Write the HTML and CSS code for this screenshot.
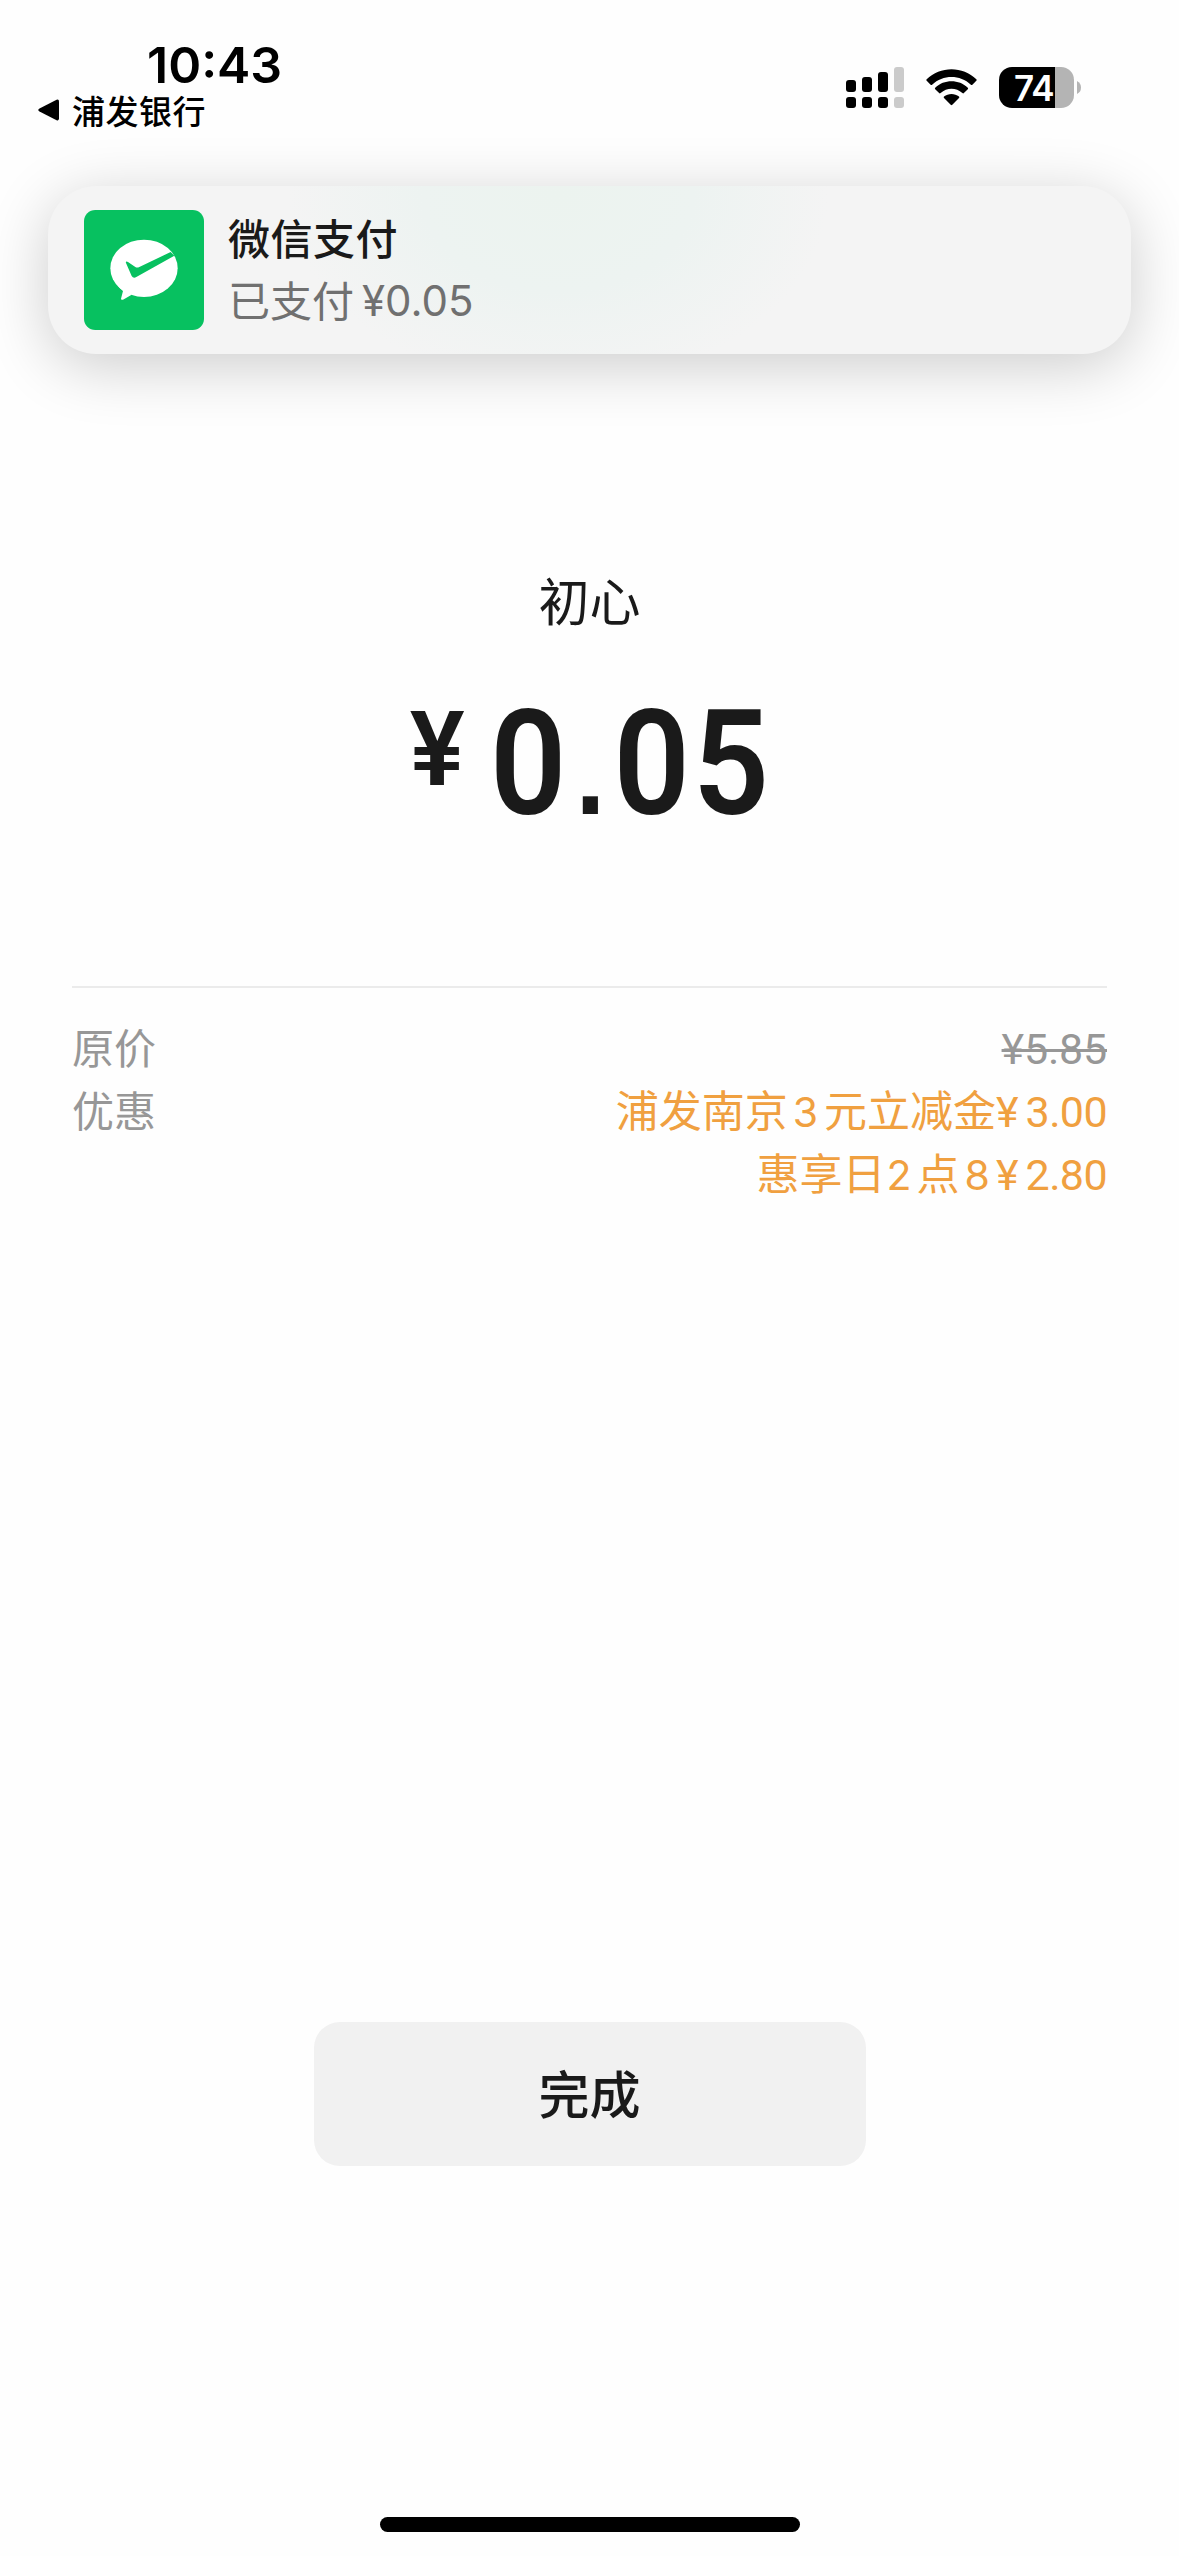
FILE: index.html
```html
<!DOCTYPE html>
<html lang="zh-CN">
<head>
<meta charset="utf-8">
<title>支付成功</title>
<link rel="stylesheet" href="styles.css">
</head>
<body>
<header class="status">
  <div class="status-left">
    <div class="clock">10:43</div>
    <div class="back">
      <svg class="back-arrow" viewBox="0 0 22 22"><path d="M1.5 9.4 18.6.8Q21 0 21 2.4V19.6Q21 22 18.6 21.2L1.5 12.6Q-1 11 1.5 9.4Z"/></svg>
      <span>浦发银行</span>
    </div>
  </div>
  <div class="status-right">
    <svg class="signal" viewBox="0 0 58 41">
      <rect x="0" y="13" width="10" height="12" rx="3"/><rect x="16" y="10" width="10" height="15" rx="3"/><rect x="32" y="5" width="10" height="20" rx="3"/>
      <rect x="0" y="30" width="10" height="11" rx="3"/><rect x="16" y="30" width="10" height="11" rx="3"/><rect x="32" y="30" width="10" height="11" rx="3"/>
      <g fill="#cbcbcb"><rect x="48" y="0" width="10" height="25" rx="3"/><rect x="48" y="30" width="10" height="11" rx="3"/></g>
    </svg>
    <svg class="wifi" viewBox="0 0 51 37">
      <path d="M.7 10.3C14-3.2 37-3.2 50.3 10.3Q51 11 50.3 11.8L46.4 15.7Q45.6 16.3 44.9 15.7C34 5.4 17 5.4 6.1 15.7Q5.4 16.3 4.6 15.7L.7 11.8Q0 11 .7 10.3Z"/>
      <path d="M9.2 18.8C18 10.2 33 10.2 41.8 18.8Q42.5 19.5 41.8 20.2L37.9 24.1Q37.2 24.7 36.4 24.1C30 18.4 21 18.4 14.6 24.1Q13.8 24.7 13.1 24.1L9.2 20.2Q8.5 19.5 9.2 18.8Z"/>
      <path d="M18 27.6C22.3 24.2 28.7 24.2 33 27.6Q33.7 28.3 33 29L26.3 35.8Q25.5 36.5 24.7 35.8L18 29Q17.3 28.3 18 27.6Z"/>
    </svg>
    <div class="battery"><span class="level">74</span></div>
    <svg class="battery-tip" viewBox="0 0 4 13"><path d="M0 0Q4 2 4 6.5T0 13Z"/></svg>
  </div>
</header>

<section class="banner">
  <svg class="pay-icon" viewBox="0 0 360 360">
    <rect width="360" height="360" rx="34" fill="#07c160"/>
    <ellipse cx="180" cy="175" rx="101" ry="86" fill="#fff"/>
    <path d="M98 225 117 243 111 266Q112 271 117 269L143 254Z" fill="#fff"/>
    <path d="M126 159C124 154 128 153 132 156L154 171Q159 174 166 171L260 126 271 137 157 201Q148 206 143 198Z" fill="#07c160"/>
  </svg>
  <div class="banner-text">
    <div class="banner-title">微信支付</div>
    <div class="banner-sub"><span>已支付</span><span class="sub-amount">¥0.05</span></div>
  </div>
</section>

<main class="result">
  <div class="merchant">初心</div>
  <div class="total"><span class="currency">¥</span><span class="digits">0<span class="dot">.</span>05</span></div>
  <div class="details">
    <div class="row"><span class="label">原价</span><span class="origin">¥5.85</span></div>
    <div class="row offer"><span class="label">优惠</span><span class="value">浦发南京<span class="num">3</span>元立减金<span class="yen">¥</span><span class="price">3.00</span></span></div>
    <div class="row offer"><span class="label"></span><span class="value">惠享日<span class="num two">2</span>点<span class="num">8</span><span class="yen">¥</span><span class="price">2.80</span></span></div>
  </div>
</main>

<button class="done">完成</button>
<div class="home-bar"></div>
</body>
</html>
```
FILE: styles.css
```css
* { box-sizing: border-box; }
body {
  margin: 0;
  width: 1179px;
  height: 2556px;
  overflow: hidden;
  display: flex;
  flex-direction: column;
  align-items: center;
  background: #fefefe;
  color: #1a1a1a;
  font-family: "Noto Sans CJK SC", sans-serif;
}
.status {
  width: 1179px;
  height: 186px;
  display: flex;
  justify-content: space-between;
  color: #000;
}
.status-left { padding: 40px 0 0 38px; }
.clock {
  height: 50px;
  margin-left: 109px;
  font: 600 50px/50px Inter, sans-serif;
}
.back {
  display: flex;
  align-items: center;
  gap: 12px;
  height: 40px;
  font-size: 33px;
  font-weight: 500;
  line-height: 40px;
  letter-spacing: 0.5px;
}
.back-arrow { width: 22px; height: 22px; }
.status-right {
  display: flex;
  align-items: flex-start;
  padding: 67px 98px 0 0;
}
.signal { width: 58px; height: 41px; }
.wifi { width: 51px; height: 37px; margin: 2px 22px 0; }
.battery {
  width: 75px;
  height: 41px;
  border-radius: 13px;
  background: linear-gradient(90deg, #000 56px, #b4b4b4 56px);
  color: #fff;
}
.level {
  display: block;
  padding-left: 15px;
  font: 600 35px/42px Inter, sans-serif;
  letter-spacing: -1px;
}
.battery-tip { width: 4px; height: 13px; margin: 14px 0 0 3px; fill: #b4b4b4; }

.banner {
  width: 1083px;
  height: 168px;
  flex: none;
  display: flex;
  align-items: center;
  gap: 24px;
  padding: 0 36px;
  border-radius: 48px;
  background: radial-gradient(ellipse 270px 190px at 510px 10px, #ecf3ef 0%, #edf3f1 50%, #f4f4f4 100%) #f4f4f4;
  box-shadow: 0 12px 62px rgba(0, 0, 0, 0.2);
}
.pay-icon { width: 120px; height: 120px; flex: none; }
.banner-text { margin-top: -4px; }
.banner-title {
  height: 62px;
  font-size: 42px;
  font-weight: 500;
  line-height: 62px;
  letter-spacing: 0.5px;
}
.banner-sub {
  display: flex;
  height: 62px;
  font-size: 42px;
  line-height: 62px;
  color: #707070;
}
.sub-amount {
  padding-top: 2px;
  margin-left: 8px;
  font-family: Inter, sans-serif;
}

.result {
  width: 1035px;
  height: 1668px;
  flex: none;
  display: flex;
  flex-direction: column;
  align-items: center;
  padding-top: 209px;
}
.merchant { height: 72px; font-size: 51px; line-height: 72px; }
.total {
  display: flex;
  justify-content: center;
  align-items: flex-start;
  height: 351px;
  padding: 55px 0 0 16px;
  font-family: Roboto, sans-serif;
  font-weight: 600;
}
.currency { font-size: 103px; line-height: 120px; }
.digits {
  margin-left: 11px;
  font-size: 147px;
  line-height: 148px;
  letter-spacing: 3px;
  transform: scaleX(0.91);
}
.dot { font: 700 118px/100px "Liberation Sans", sans-serif; margin: 0 6px 0 7px; }
.details {
  width: 1035px;
  border-top: 2px solid #ebebeb;
  padding-top: 26px;
  font-size: 42px;
}
.row {
  display: flex;
  justify-content: space-between;
  height: 63px;
  line-height: 63px;
}
.label { color: #979797; }
.origin {
  padding-top: 4px;
  font-family: Roboto, sans-serif;
  font-size: 43px;
  letter-spacing: -0.2px;
  color: #979797;
  text-decoration: line-through;
  text-decoration-thickness: 3px;
}
.value { color: #f0a040; display: flex; font-size: 43px; }
.num { margin: 0 6px 0 5px; padding-top: 4px; font-family: Inter, sans-serif; font-size: 41px; }
.two { margin: 0 5px 0 1px; }
.yen, .price { padding-top: 4px; font-family: Roboto, sans-serif; font-size: 43px; }
.price { margin: 0 0 0 7px; letter-spacing: -0.6px; }

.done {
  width: 552px;
  height: 144px;
  flex: none;
  border: 0;
  border-radius: 26px;
  background: #f1f1f1;
  color: #1a1a1a;
  font-family: "Noto Sans CJK SC", sans-serif;
  font-size: 51px;
  font-weight: 500;
  line-height: 140px;
  padding: 0 0 4px;
}
.home-bar {
  width: 420px;
  height: 15px;
  margin-top: 351px;
  border-radius: 8px;
  background: #000;
}
```
